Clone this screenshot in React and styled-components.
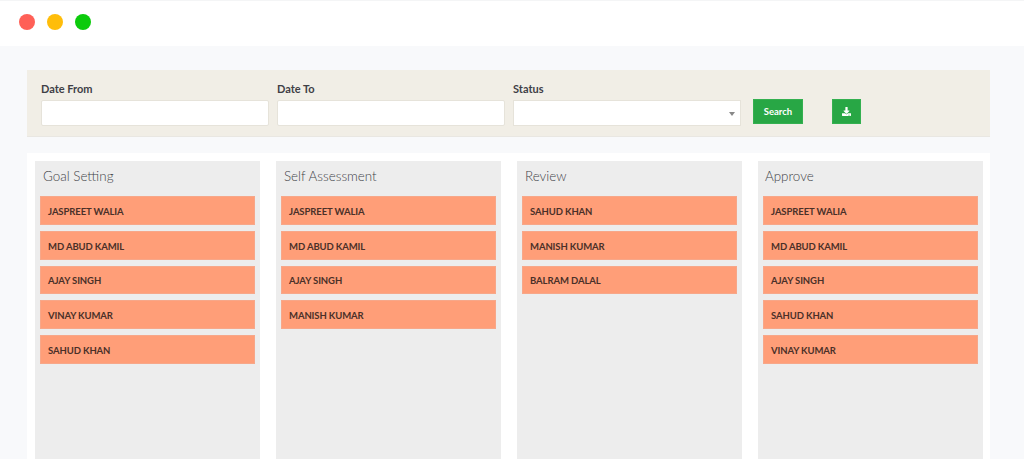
import React from 'react';
import styled, { createGlobalStyle } from 'styled-components';
import { FaDownload } from 'react-icons/fa';

const GlobalStyle = createGlobalStyle`
  html, body {
    margin: 0;
    height: 459px;
    overflow: hidden;
    background: #f8f9fb;
    font-family: Lato, "Liberation Sans", sans-serif;
  }
`;

const TitleBar = styled.div`
  height: 46px;
  box-sizing: border-box;
  background: #fff;
  border-top: 1px solid #f4f5f6;
  padding: 0 0 3px 19px;
  display: flex;
  align-items: center;
  gap: 12px;
`;

const Dot = styled.span`
  width: 16px;
  height: 16px;
  border-radius: 50%;
  background: ${(p) => p.$color};
`;

const Main = styled.div`
  padding: 24px 34px 0 27px;
  display: flex;
  flex-direction: column;
  gap: 16px;
`;

const FilterBar = styled.div`
  height: 67px;
  box-sizing: border-box;
  background: #f1eee6;
  border-bottom: 1px solid #e9e7e2;
  padding: 12px 14px 0;
  display: flex;
  align-items: flex-start;
`;

const Field = styled.div`
  width: 228px;
  margin-right: 8px;
  display: flex;
  flex-direction: column;
  gap: 4px;
`;

const Label = styled.label`
  font-size: 11px;
  line-height: 14px;
  font-weight: 700;
  color: #3f3f46;
`;

const Input = styled.input`
  height: 26px;
  box-sizing: border-box;
  background: #fff;
  border: 1px solid #e6e3da;
  border-radius: 2px;
  outline: none;
`;

const SelectBox = styled.div`
  height: 26px;
  box-sizing: border-box;
  background: #fff;
  border: 1px solid #e6e3da;
  position: relative;
  &::after {
    content: '';
    position: absolute;
    right: 5px;
    top: 11px;
    border-left: 3px solid transparent;
    border-right: 3px solid transparent;
    border-top: 4px solid #888;
  }
`;

const GreenButton = styled.button`
  height: 25px;
  width: ${(p) => p.$width}px;
  margin: 17px 0 0 ${(p) => p.$left}px;
  padding: 0;
  box-sizing: border-box;
  background: #28a745;
  border: 1px solid #34b050;
  color: #fff;
  font-family: inherit;
  font-size: 9.5px;
  font-weight: 700;
  display: flex;
  align-items: center;
  justify-content: center;
`;

const Board = styled.div`
  height: 306px;
  box-sizing: border-box;
  background: #fff;
  padding: 8px 7px 0 8px;
  display: grid;
  grid-template-columns: repeat(4, 225px);
  gap: 16px;
`;

const Column = styled.div`
  background: #ededed;
  padding: 0 5px;
`;

const ColumnTitle = styled.h3`
  margin: 0;
  height: 35px;
  padding-left: ${(p) => p.$indent}px;
  font-size: 13.4px;
  line-height: 30px;
  font-weight: 300;
  color: #3f4348;
`;

const CardList = styled.div`
  display: flex;
  flex-direction: column;
  gap: 6px;
`;

const Card = styled.div`
  height: 28.75px;
  box-sizing: border-box;
  background: #ff9e78;
  border: 1px solid #f7a789;
  padding: 2px 0 0 7px;
  display: flex;
  align-items: center;
  font-size: 9.5px;
  font-weight: 700;
  letter-spacing: -0.1px;
  color: #4a3028;
`;

const columns = [
  { title: 'Goal Setting', indent: 3, people: ['JASPREET WALIA', 'MD ABUD KAMIL', 'AJAY SINGH', 'VINAY KUMAR', 'SAHUD KHAN'] },
  { title: 'Self Assessment', indent: 3, people: ['JASPREET WALIA', 'MD ABUD KAMIL', 'AJAY SINGH', 'MANISH KUMAR'] },
  { title: 'Review', indent: 3, people: ['SAHUD KHAN', 'MANISH KUMAR', 'BALRAM DALAL'] },
  { title: 'Approve', indent: 2, people: ['JASPREET WALIA', 'MD ABUD KAMIL', 'AJAY SINGH', 'SAHUD KHAN', 'VINAY KUMAR'] },
];

const App = () => (
  <>
    <GlobalStyle />
    <TitleBar>
      <Dot $color="#ff6057" />
      <Dot $color="#ffbd0a" />
      <Dot $color="#0ccb0c" />
    </TitleBar>
    <Main>
      <FilterBar>
        <Field>
          <Label>Date From</Label>
          <Input />
        </Field>
        <Field>
          <Label>Date To</Label>
          <Input />
        </Field>
        <Field>
          <Label>Status</Label>
          <SelectBox />
        </Field>
        <GreenButton $width={50} $left={4}>Search</GreenButton>
        <GreenButton $width={29} $left={29}>
          <FaDownload size={9} />
        </GreenButton>
      </FilterBar>
      <Board>
        {columns.map((col) => (
          <Column key={col.title}>
            <ColumnTitle $indent={col.indent}>{col.title}</ColumnTitle>
            <CardList>
              {col.people.map((name) => (
                <Card key={name}>{name}</Card>
              ))}
            </CardList>
          </Column>
        ))}
      </Board>
    </Main>
  </>
);

export default App;
